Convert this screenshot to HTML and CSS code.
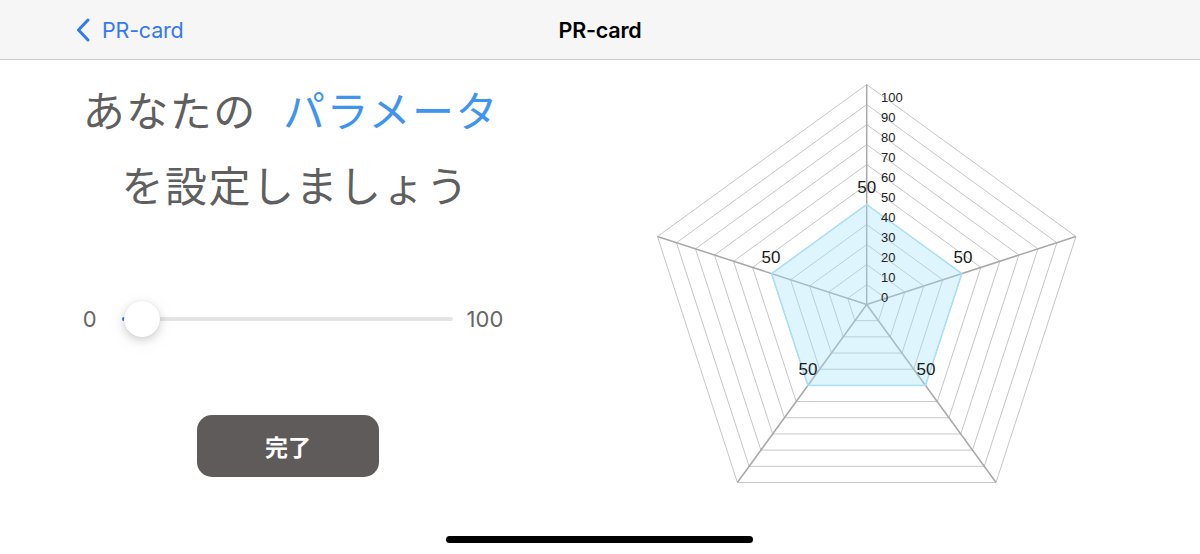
FILE: index.html
```html
<!DOCTYPE html>
<html lang="ja">
<head>
<meta charset="utf-8">
<title>PR-card</title>
<link rel="stylesheet" href="styles.css">
</head>
<body>
<header class="navbar">
  <a class="back" href="#">
    <svg class="chevron" width="14" height="24" viewBox="0 0 14 24"><path d="M12 2 L2.5 12 L12 22" fill="none" stroke="#3478f6" stroke-width="3" stroke-linecap="round" stroke-linejoin="round"/></svg>
    <span class="back-text">PR-card</span>
  </a>
  <h1 class="nav-title">PR-card</h1>
  <span class="nav-spacer"></span>
</header>

<main class="content">
  <section class="left">
    <div class="heading">
      <p class="line">あなたの<span class="accent">パラメータ</span></p>
      <p class="line second">を設定しましょう</p>
    </div>
    <div class="slider-row">
      <span class="slider-label min">0</span>
      <div class="track">
        <span class="track-fill"></span>
        <span class="thumb"></span>
      </div>
      <span class="slider-label max">100</span>
    </div>
    <button class="done">完了</button>
  </section>

  <section class="right">
    <svg class="radar" width="460" height="430" viewBox="0 0 460 430">
      <g transform="translate(226.7 234.5)">
        <g class="rings">
          <polygon points="0,-20 19.02,-6.18 11.76,16.18 -11.76,16.18 -19.02,-6.18"/>
          <polygon points="0,-40 38.04,-12.36 23.51,32.36 -23.51,32.36 -38.04,-12.36"/>
          <polygon points="0,-60 57.06,-18.54 35.27,48.54 -35.27,48.54 -57.06,-18.54"/>
          <polygon points="0,-80 76.08,-24.72 47.02,64.72 -47.02,64.72 -76.08,-24.72"/>
          <polygon points="0,-100 95.11,-30.90 58.78,80.90 -58.78,80.90 -95.11,-30.90"/>
          <polygon points="0,-120 114.13,-37.08 70.53,97.08 -70.53,97.08 -114.13,-37.08"/>
          <polygon points="0,-140 133.15,-43.26 82.29,113.26 -82.29,113.26 -133.15,-43.26"/>
          <polygon points="0,-160 152.17,-49.44 94.05,129.44 -94.05,129.44 -152.17,-49.44"/>
          <polygon points="0,-180 171.19,-55.62 105.80,145.62 -105.80,145.62 -171.19,-55.62"/>
          <polygon points="0,-200 190.21,-61.80 117.56,161.80 -117.56,161.80 -190.21,-61.80"/>
          <polygon points="0,-220 209.23,-67.98 129.31,177.98 -129.31,177.98 -209.23,-67.98"/>
        </g>
        <g class="spokes">
          <line x1="0" y1="0" x2="0" y2="-220"/>
          <line x1="0" y1="0" x2="209.23" y2="-67.98"/>
          <line x1="0" y1="0" x2="129.31" y2="177.98"/>
          <line x1="0" y1="0" x2="-129.31" y2="177.98"/>
          <line x1="0" y1="0" x2="-209.23" y2="-67.98"/>
        </g>
        <polygon class="data" points="0,-100 95.11,-30.90 58.78,80.90 -58.78,80.90 -95.11,-30.90"/>
      </g>
      <g class="ticks">
        <text x="241" y="227">0</text>
        <text x="241" y="207">10</text>
        <text x="241" y="187">20</text>
        <text x="241" y="167">30</text>
        <text x="241" y="147">40</text>
        <text x="241" y="127">50</text>
        <text x="241" y="107">60</text>
        <text x="241" y="87">70</text>
        <text x="241" y="67">80</text>
        <text x="241" y="47">90</text>
        <text x="241" y="27">100</text>
      </g>
      <g class="point-labels">
        <text x="226.7" y="117">50</text>
        <text x="323" y="187">50</text>
        <text x="286" y="299">50</text>
        <text x="168" y="299">50</text>
        <text x="131" y="187">50</text>
      </g>
    </svg>
  </section>
</main>

<div class="home-indicator"></div>
</body>
</html>
```

FILE: styles.css
```css
* { box-sizing: border-box; }

html, body {
  margin: 0;
  padding: 0;
  background: #ffffff;
  width: 1200px;
  height: 554px;
  overflow: hidden;
  font-family: "Inter", "Noto Sans CJK JP", sans-serif;
}

.navbar {
  height: 60px;
  background: #f6f6f6;
  border-bottom: 1px solid #cfcfcf;
  display: grid;
  grid-template-columns: 1fr auto 1fr;
  align-items: center;
  padding: 0 0 0 76px;
}

.back {
  display: flex;
  align-items: center;
  gap: 12px;
  text-decoration: none;
  color: #3478f6;
}

.chevron { display: block; }

.back-text {
  font-size: 21.5px;
  color: #3478f6;
  letter-spacing: -0.2px;
}

.nav-title {
  margin: 0;
  font-size: 21.5px;
  font-weight: 600;
  color: #000;
  letter-spacing: -0.2px;
  transform: translateX(-38px);
}

.content {
  display: flex;
  height: 494px;
}

.left {
  width: 582px;
  display: flex;
  flex-direction: column;
  align-items: center;
}

.heading {
  margin-top: 11px;
  text-align: center;
  font-family: "Noto Sans CJK JP", sans-serif;
  font-size: 42px;
  letter-spacing: 1.5px;
  color: #5f5f5f;
  line-height: 75px;
}

.line {
  margin: 0;
  white-space: nowrap;
}

.line.second { padding-left: 9px; }

.accent {
  color: #3d95ef;
  margin-left: 26px;
}

.slider-row {
  margin-top: 80px;
  height: 36px;
  display: flex;
  align-items: center;
  padding-left: 4px;
}

.slider-label {
  font-size: 22px;
  color: #666;
}

.slider-label.min { margin-right: 25px; }
.slider-label.max { margin-left: 14px; }

.track {
  position: relative;
  width: 331px;
  height: 4px;
  border-radius: 2px;
  background: #e4e4e4;
}

.track-fill {
  position: absolute;
  left: 0;
  top: 0;
  width: 4px;
  height: 4px;
  border-radius: 2px;
  background: #2f7bf5;
}

.thumb {
  position: absolute;
  left: 2px;
  top: -16px;
  width: 36px;
  height: 36px;
  border-radius: 50%;
  background: #fff;
  box-shadow: 0 3px 8px rgba(0,0,0,0.16), 0 0 1px rgba(0,0,0,0.12), 0 4px 22px rgba(0,0,0,0.06);
}

.done {
  margin-top: 78px;
  margin-left: -6px;
  width: 182px;
  height: 62px;
  border: none;
  border-radius: 15px;
  background: #5f5b5a;
  color: #fff;
  font-family: "Noto Sans CJK JP", sans-serif;
  font-weight: 700;
  font-size: 23px;
  padding: 0;
}

.right { flex: none; }

.radar {
  display: block;
  margin: 10px 0 0 58px;
  overflow: visible;
}

.rings polygon {
  fill: none;
  stroke: #c6c6c6;
  stroke-width: 1;
}

.spokes line {
  stroke: #a8a8a8;
  stroke-width: 1.5;
}

.data {
  fill: rgba(160, 225, 248, 0.35);
  stroke: #a9e1f5;
  stroke-width: 1.5;
}

.ticks text {
  font-family: "Liberation Sans", sans-serif;
  font-size: 13px;
  fill: #222;
  dominant-baseline: central;
}

.point-labels text {
  font-family: "Liberation Sans", sans-serif;
  font-size: 17px;
  fill: #1a1a1a;
  text-anchor: middle;
  dominant-baseline: central;
}

.home-indicator {
  position: absolute;
  left: 446px;
  top: 536px;
  width: 307px;
  height: 7px;
  border-radius: 4px;
  background: #000;
}
```
